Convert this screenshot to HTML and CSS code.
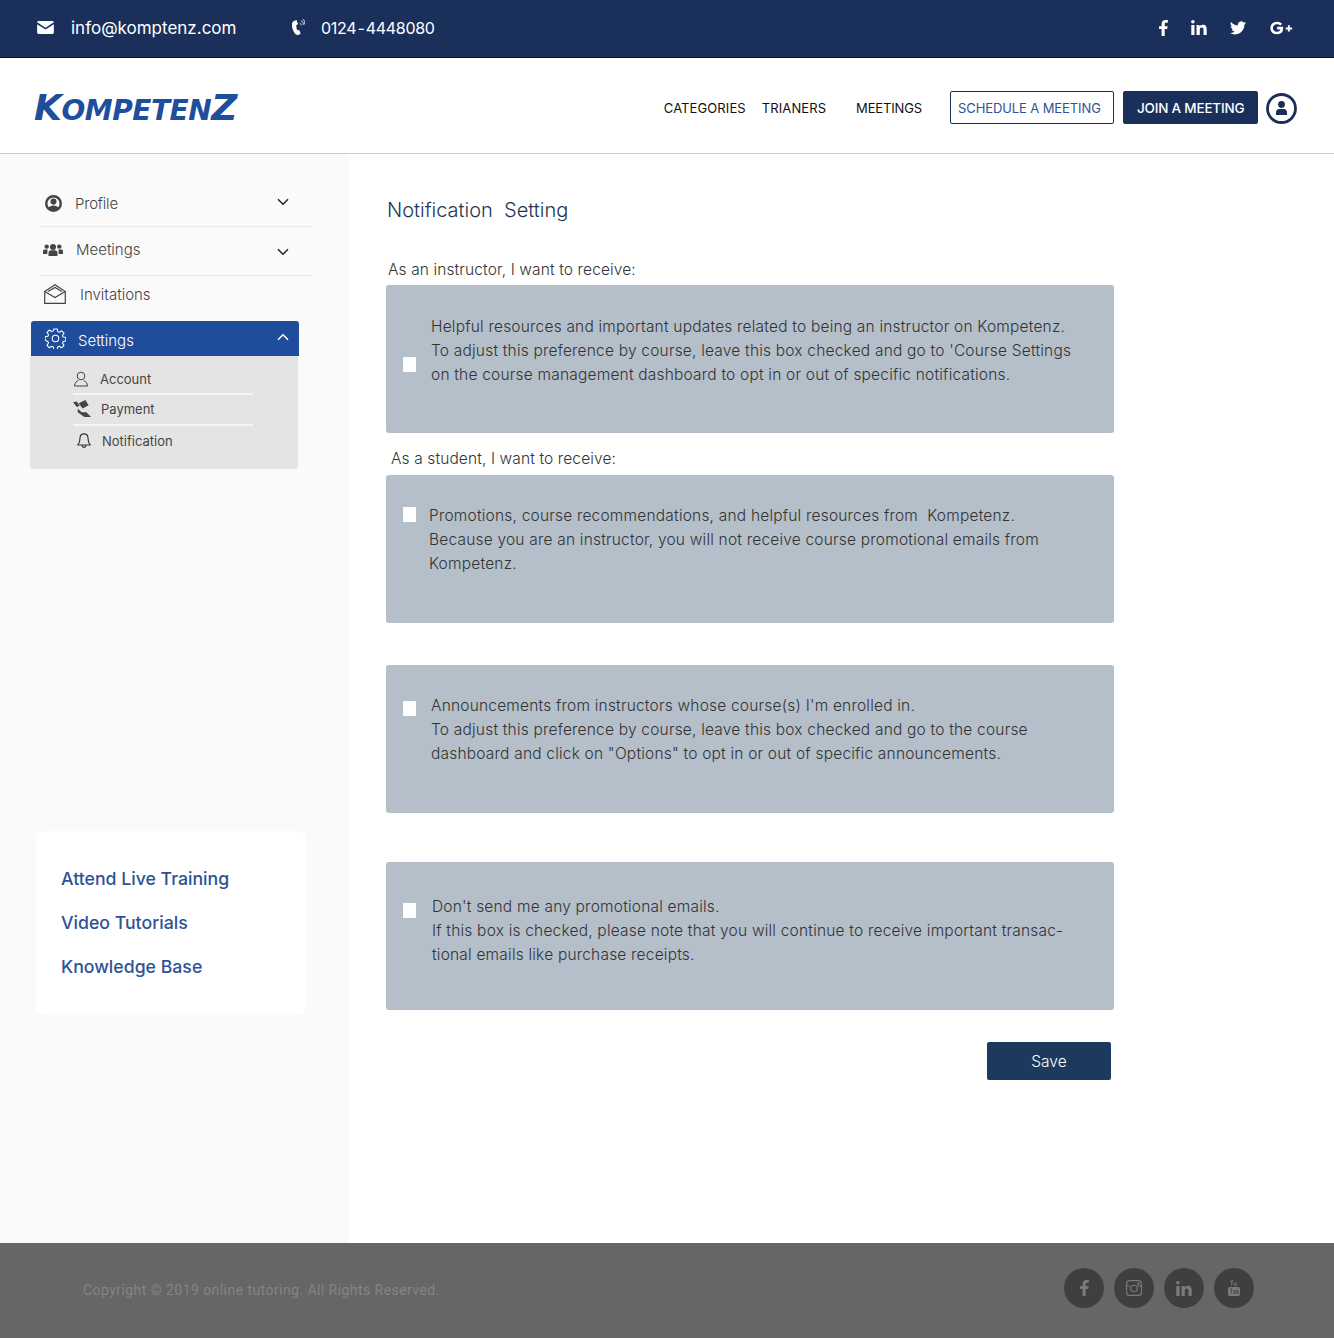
FILE: index.html
```html
<!DOCTYPE html>
<html lang="en">
<head>
    <meta charset="UTF-8">
    <title>Kompetenz - Notification Setting</title>
    <link rel="stylesheet" href="styles.css">
</head>
<body>
    <div class="topbar">
        <div class="contact">
            <svg class="ico-mail" viewBox="0 0 18 14"><path d="M1.500 0h15c.8 0 1.500.7 1.500 1.400L9 7.200 0 1.400C0 .7.7 0 1.500 0z" fill="#fff"/><path d="M0 3.400l9 5.700 9-5.700v9.100c0 .8-.7 1.500-1.500 1.500h-15C.7 14 0 13.300 0 12.500z" fill="#fff"/></svg>
            <span class="mail-text">info@komptenz.com</span>
            <svg class="ico-phone" viewBox="0 0 14 18"><path d="M3 2L5.600 1l1.400 4-1.700 1.300c-.1 1.800.2 3.400 1 5l1.900-.2 1.500 3.600-2.400 1.200c-1.600.4-3.200-.6-4.200-2.600C1.500 10.800.8 7.500 1 5c.1-1.300.9-2.400 2-3z" fill="#fff"/><path d="M8.800 4.200c.9.200 1.200 1 1.100 2M10.200 2c1.700.4 2.300 2 2 3.900M11.500.4c2 .6 2.700 2.600 2.200 5" fill="none" stroke="#fff" stroke-width=".9"/></svg>
            <span class="phone-text">0124 - 4448080</span>
        </div>
        <div class="top-social">
            <svg class="ico-f" viewBox="0 0 9 16"><path d="M2.600 16V9H0V6.200h2.600V4.100C2.600 1.500 4.100 0 6.500 0c1.100 0 2 .1 2.300.1v2.600H7.200c-1.200 0-1.500.6-1.500 1.400v2.100h2.900L8.200 9H5.700v7z" fill="#fff"/></svg>
            <svg class="ico-in" viewBox="0 0 16 15"><path d="M.3 5h3.200v10H.3zM1.900 0a1.800 1.800 0 1 1 0 3.600 1.800 1.800 0 0 1 0-3.600zM5.500 5h3v1.400c.5-.9 1.600-1.700 3.200-1.700 3.300 0 4 2.100 4 4.900V15h-3.200V10.200c0-1.200 0-2.700-1.700-2.700s-2 1.300-2 2.600V15H5.500z" fill="#fff"/></svg>
            <svg class="ico-tw" viewBox="0 0 24 20"><path d="M24 2.400c-.9.400-1.800.7-2.800.8 1-.6 1.800-1.600 2.200-2.700-1 .6-2 1-3.100 1.200A4.900 4.900 0 0 0 11.900 6.200 14 14 0 0 1 1.700.9a4.900 4.900 0 0 0 1.500 6.600c-.8 0-1.600-.2-2.200-.6v.1c0 2.400 1.700 4.400 3.900 4.800-.7.200-1.500.2-2.200.1.600 2 2.400 3.400 4.600 3.400A9.900 9.900 0 0 1 0 17.400 14 14 0 0 0 7.500 19.600c9.100 0 14-7.500 14-14v-.6c1-.7 1.800-1.600 2.500-2.600z" fill="#fff"/></svg>
            <svg class="ico-gp" viewBox="0 0 24 14"><path d="M12.200 3.600A5.400 5.400 0 0 0 8.200 2 5 5 0 0 0 2.600 7 5 5 0 0 0 8 12c3 0 4.900-1.800 4.900-4.900H8.200" fill="none" stroke="#fff" stroke-width="2.600"/><path d="M19.900 4.200v6.400M16.700 7.400h6.400" fill="none" stroke="#fff" stroke-width="2"/></svg>
        </div>
    </div>

    <div class="navbar">
        <div class="logo"><span class="logo-cap">K</span>OMPETEN<span class="logo-cap">Z</span></div>
        <div class="nav-links">
            <a class="nav-categories">CATEGORIES</a>
            <a class="nav-trainers">TRIANERS</a>
            <a class="nav-meetings">MEETINGS</a>
            <a class="btn-outline">SCHEDULE A MEETING</a>
            <a class="btn-solid">JOIN A MEETING</a>
            <svg class="ico-user" viewBox="0 0 31 31"><circle cx="15.500" cy="15.500" r="14" fill="none" stroke="#1b2f5b" stroke-width="2.800"/><circle cx="15.500" cy="11.500" r="3.400" fill="#1b2f5b"/><path d="M10 22v-2.500c0-2.400 1.500-3.600 3-3.600h5c1.500 0 3 1.200 3 3.600V22z" fill="#1b2f5b"/></svg>
        </div>
    </div>

    <div class="page">
        <div class="sidebar">
            <div class="side-row row-profile">
                <svg class="side-ico ico-profile" viewBox="0 0 18 18"><circle cx="9" cy="9" r="7.700" fill="none" stroke="#444" stroke-width="2.600"/><circle cx="9" cy="7" r="3.200" fill="#444"/><path d="M3.500 14c1-2.200 3-3 5.500-3s4.500.8 5.500 3L9 17z" fill="#444"/></svg>
                <span>Profile</span>
                <svg class="chev" viewBox="0 0 12 8"><path d="M1 1.200l5 5 5-5" fill="none" stroke="#222" stroke-width="1.500"/></svg>
            </div>
            <div class="side-row row-meetings">
                <svg class="side-ico ico-group" viewBox="0 0 20 13"><circle cx="10" cy="4" r="3" fill="#444"/><circle cx="3.700" cy="3.600" r="2.200" fill="#444"/><circle cx="16.300" cy="3.600" r="2.200" fill="#444"/><path d="M5.500 13V10c0-1.800 1.300-2.700 2.500-2.700h4c1.200 0 2.500.9 2.500 2.700v3z" fill="#444"/><path d="M0 10.500V8.200C0 7 1 6.400 2 6.400h2.500L4.300 11H0zM20 10.500V8.200c0-1.200-1-1.800-2-1.800h-2.500l.2 4.600H20z" fill="#444"/></svg>
                <span>Meetings</span>
                <svg class="chev chev-low" viewBox="0 0 12 8"><path d="M1 1.200l5 5 5-5" fill="none" stroke="#222" stroke-width="1.500"/></svg>
            </div>
            <div class="side-row row-invites">
                <svg class="side-ico ico-open" viewBox="0 0 22 20"><path d="M.7 7.500L11 .8l10.300 6.700v11.800H.7z" fill="none" stroke="#444" stroke-width="1.200"/><path d="M.7 7.500L11 13.600l10.300-6.100M4 7.500L11 3.500l7 4" fill="none" stroke="#444" stroke-width="1.200"/></svg>
                <span>Invitations</span>
            </div>
            <div class="settings-head">
                <svg class="ico-gear" viewBox="0 0 22 22"><path d="M9.200 1h3.600l.5 2.800 1.700.7 2.400-1.600 2.500 2.500-1.600 2.400.7 1.700 2.800.5v3.600l-2.800.5-.7 1.700 1.600 2.400-2.500 2.500-2.400-1.600-1.700.7-.5 2.800H9.200l-.5-2.800-1.700-.7-2.400 1.600-2.500-2.500 1.600-2.400-.7-1.700L.2 12.800V9.200L3 8.700l.7-1.700-1.600-2.400 2.500-2.500L7 3.700l1.700-.7z" fill="none" stroke="#fff" stroke-width="1.100" stroke-linejoin="round"/><circle cx="11" cy="11" r="3.400" fill="none" stroke="#fff" stroke-width="1.100"/></svg>
                <span>Settings</span>
                <svg class="chev chev-up" viewBox="0 0 12 8"><path d="M1 6.800l5-5 5 5" fill="none" stroke="#fff" stroke-width="1.500"/></svg>
            </div>
            <div class="settings-sub">
                <div class="sub-row sub-account">
                    <svg class="sub-ico" viewBox="0 0 16 16"><circle cx="8" cy="5" r="3.800" fill="none" stroke="#444" stroke-width="1"/><path d="M1.500 15c0-3.400 2.500-5 3.800-5.500M14.500 15c0-3.400-2.500-5-3.800-5.500M1.500 15h13" fill="none" stroke="#444" stroke-width="1"/></svg>
                    <span>Account</span>
                </div>
                <div class="sub-row sub-payment">
                    <svg class="sub-ico ico-pay" viewBox="0 0 20 19"><path d="M0 2.500l4-1 3 4.500-3 1.500z" fill="#444"/><path d="M6 3.500L13 0l3.500 5.500-6.500 3.500z" fill="#444"/><path d="M5 9l4 4h5l5 5h-7L5 13z" fill="#444"/></svg>
                    <span>Payment</span>
                </div>
                <div class="sub-row sub-notif">
                    <svg class="sub-ico" viewBox="0 0 16 18"><path d="M8 1c-3 0-4.500 2.300-4.500 5 0 4-1 5.800-2.500 7.500h14C13.500 11.800 12.500 10 12.500 6 12.500 3.300 11 1 8 1z" fill="none" stroke="#333" stroke-width="1.300" stroke-linejoin="round"/><path d="M6 13.800c0 3 4 3 4 0" fill="none" stroke="#333" stroke-width="1.300"/></svg>
                    <span>Notification</span>
                </div>
            </div>
            <div class="quick-links">
                <a>Attend Live Training</a>
                <a>Video Tutorials</a>
                <a>Knowledge Base</a>
            </div>
        </div>

        <div class="content">
            <h1 class="page-title">Notification&nbsp; Setting</h1>
            <p class="group-label label-instructor">As an instructor, I want to receive:</p>
            <div class="pref-card card-one">
                <span class="check"></span>
                <p>Helpful resources and important updates related to being an instructor on Kompetenz.<br>To adjust this preference by course, leave this box checked and go to 'Course Settings<br>on the course management dashboard to opt in or out of specific notifications.</p>
            </div>
            <p class="group-label label-student">As a student, I want to receive:</p>
            <div class="pref-card card-two">
                <span class="check"></span>
                <p>Promotions, course recommendations, and helpful resources from&nbsp; Kompetenz.<br>Because you are an instructor, you will not receive course promotional emails from<br>Kompetenz.</p>
            </div>
            <div class="pref-card card-three">
                <span class="check"></span>
                <p>Announcements from instructors whose course(s) I'm enrolled in.<br>To adjust this preference by course, leave this box checked and go to the course<br>dashboard and click on "Options" to opt in or out of specific announcements.</p>
            </div>
            <div class="pref-card card-four">
                <span class="check"></span>
                <p>Don't send me any promotional emails.<br>If this box is checked, please note that you will continue to receive important transac-<br>tional emails like purchase receipts.</p>
            </div>
            <div class="save-row"><button class="save-btn">Save</button></div>
        </div>
    </div>

    <div class="footer">
        <span class="copyright">Copyright © 2019 online tutoring. All Rights Reserved.</span>
        <div class="foot-social">
            <span class="foot-circle"><svg width="9" height="16" viewBox="0 0 9 16"><path d="M2.600 16V9H0V6.200h2.600V4.100C2.600 1.500 4.100 0 6.500 0c1.100 0 2 .1 2.300.1v2.600H7.200c-1.200 0-1.500.6-1.500 1.400v2.100h2.900L8.200 9H5.700v7z" fill="#7b7b7b"/></svg></span>
            <span class="foot-circle"><svg width="16" height="16" viewBox="0 0 16 16"><rect x=".6" y=".6" width="14.800" height="14.800" rx="3" fill="none" stroke="#7b7b7b" stroke-width="1.100"/><circle cx="8" cy="8.500" r="3.200" fill="none" stroke="#7b7b7b" stroke-width="1.100"/><path d="M.6 6h3.800M11.600 6h3.800" stroke="#7b7b7b" stroke-width="1.100"/><rect x="11.300" y="2.600" width="2.200" height="2.200" fill="#7b7b7b"/></svg></span>
            <span class="foot-circle"><svg width="16" height="15" viewBox="0 0 16 15"><path d="M.3 5h3.200v10H.3zM1.900 0a1.800 1.800 0 1 1 0 3.600 1.800 1.800 0 0 1 0-3.600zM5.500 5h3v1.400c.5-.9 1.600-1.700 3.200-1.700 3.300 0 4 2.100 4 4.900V15h-3.200V10.200c0-1.200 0-2.700-1.700-2.700s-2 1.300-2 2.600V15H5.500z" fill="#7b7b7b"/></svg></span>
            <span class="foot-circle"><svg width="12" height="16" viewBox="0 0 12 16"><path d="M2.500 0l1.200 2.600L4.900 0M3.700 2.600v3M6.200 2.500v2.400c0 .6.600.8 1.100.4l.7-.4M8.200 2.500v3.200" fill="none" stroke="#7b7b7b" stroke-width=".9"/><rect y="7" width="12" height="9" rx="2" fill="#7b7b7b"/><path d="M2 9h2.400M3.200 9v5M5.600 10v3.600h1.600V10M8.800 9v4.600h1.600V11H8.800" fill="none" stroke="#3f3f3f" stroke-width=".7"/></svg></span>
        </div>
    </div>
</body>
</html>
```

FILE: styles.css
```css
* {
    box-sizing: border-box;
}
body {
    margin: 0;
    font-family: 'Inter', sans-serif;
    background: #fff;
    color: #333;
}
p, h1 {
    margin: 0;
}
svg {
    display: block;
    flex: none;
}

/* top bar */
.topbar {
    height: 58px;
    background: #1b2f5b;
    border-bottom: 1px solid #0c1220;
    color: #fff;
    display: flex;
    justify-content: space-between;
    align-items: center;
    padding: 0 41px 2px 37px;
}
.contact, .top-social {
    display: flex;
    align-items: center;
}
.ico-mail {
    width: 17px;
    height: 13px;
    margin-right: 17px;
}
.mail-text {
    font-size: 17px;
    width: 220px;
    white-space: nowrap;
}
.ico-phone {
    width: 14px;
    height: 18px;
    margin-right: 16px;
}
.phone-text {
    font-size: 16px;
    white-space: nowrap;
    word-spacing: -3px;
    letter-spacing: -0.3px;
}
.ico-f {
    width: 9px;
    height: 16px;
    margin-right: 23px;
}
.ico-in {
    width: 16px;
    height: 15px;
    margin-right: 23px;
}
.ico-tw {
    width: 16px;
    height: 14px;
    margin-right: 23px;
}
.ico-gp {
    width: 24px;
    height: 14px;
}

/* nav */
.navbar {
    height: 96px;
    border-bottom: 1px solid #ccc;
    display: flex;
    justify-content: space-between;
    align-items: center;
    padding: 4px 37px 0 34px;
}
.logo {
    font-family: 'DejaVu Sans', sans-serif;
    font-weight: bold;
    font-style: italic;
    font-size: 28px;
    letter-spacing: -0.45px;
    color: #1f4e9c;
    white-space: nowrap;
}
.logo-cap {
    font-size: 36px;
}
.nav-links {
    display: flex;
    align-items: center;
    font-size: 13px;
    letter-spacing: 0.1px;
    color: #111;
}
.nav-categories {
    margin-right: 16px;
}
.nav-trainers {
    margin-right: 30px;
}
.nav-meetings {
    margin-right: 28px;
    letter-spacing: -0.15px;
}
.btn-outline, .btn-solid {
    height: 33px;
    display: flex;
    align-items: center;
    border-radius: 2px;
    border: 1px solid #1b2f5b;
}
.btn-outline {
    width: 164px;
    color: #2f5296;
    margin-right: 9px;
    padding-left: 7px;
    font-size: 13px;
    letter-spacing: -0.1px;
}
.btn-solid {
    width: 135px;
    background: #1b2f5b;
    color: #fff;
    font-size: 13.5px;
    font-weight: 500;
    margin-right: 8px;
    padding-left: 13px;
    letter-spacing: -0.2px;
    white-space: nowrap;
}
.ico-user {
    width: 31px;
    height: 31px;
    margin-top: 2px;
}

/* sidebar */
.page {
    display: flex;
    height: 1089px;
}
.sidebar {
    width: 349px;
    background: #fafafa;
    padding: 27px 0 0 30px;
    flex: none;
}
.side-row {
    display: flex;
    align-items: center;
    position: relative;
    width: 272px;
    margin-left: 10px;
    font-size: 15px;
    font-weight: 300;
    color: #444;
}
.row-profile {
    height: 46px;
    padding-left: 5px;
    border-bottom: 1px solid #e8e8e8;
    letter-spacing: -0.2px;
}
.row-meetings {
    height: 49px;
    padding: 0 0 4px 3px;
    border-bottom: 1px solid #e8e8e8;
}
.row-invites {
    height: 40px;
    padding: 0 0 4px 4px;
}
.side-ico {
    margin-right: 14px;
}
.ico-profile {
    width: 17px;
    height: 17px;
    margin-right: 13px;
}
.ico-group {
    width: 20px;
    height: 13px;
    margin-right: 13px;
}
.ico-open {
    width: 22px;
    height: 20px;
    margin-right: 14px;
}
.chev {
    position: absolute;
    left: 237px;
    top: 50%;
    width: 12px;
    height: 8px;
    margin-top: -6px;
}
.chev-low {
    margin-top: -3px;
}
.settings-head {
    position: relative;
    width: 268px;
    height: 35px;
    margin: 5px 0 0 1px;
    background: #204d9b;
    border-radius: 3px 3px 0 0;
    color: #fff;
    font-size: 15px;
    font-weight: 300;
    display: flex;
    align-items: center;
    padding: 4px 0 0 14px;
}
.ico-gear {
    width: 21px;
    height: 21px;
    margin: -4px 12px 0 0;
}
.chev-up {
    left: 246px;
}
.settings-sub {
    width: 268px;
    height: 113px;
    background: #e4e4e4;
    border-radius: 0 0 3px 3px;
    padding: 8px 0 0 43px;
}
.sub-row {
    width: 180px;
    display: flex;
    align-items: center;
    font-size: 13px;
    color: #444;
    height: 31px;
    border-bottom: 2px solid #f5f5f5;
}
.sub-payment {
    padding-bottom: 2px;
}
.sub-notif {
    border-bottom: none;
    padding-bottom: 2px;
}
.sub-ico {
    width: 16px;
    height: 16px;
    margin: 0 11px 0 0;
}
.sub-notif .sub-ico {
    margin: 0 10px 0 3px;
}
.ico-pay {
    width: 19px;
    height: 18px;
    margin-right: 9px;
}
.quick-links {
    width: 270px;
    height: 184px;
    margin: 362px 0 0 6px;
    background: #fff;
    border-radius: 8px;
    padding: 37px 0 0 25px;
    display: flex;
    flex-direction: column;
    gap: 22px;
    font-size: 17.7px;
    line-height: 22px;
    font-weight: 500;
    color: #2f5296;
}

/* notification settings */
.content {
    padding: 42px 0 0 37px;
    width: 800px;
}
.page-title {
    font-size: 20px;
    line-height: 28px;
    font-weight: 300;
    color: #1d3557;
    padding-left: 1px;
}
.group-label {
    font-size: 15.5px;
    line-height: 20px;
    font-weight: 300;
    letter-spacing: 0.12px;
    color: #333;
}
.label-instructor {
    margin: 36px 0 5px 2px;
}
.label-student {
    margin: 16px 0 6px 5px;
}
.pref-card {
    width: 728px;
    height: 148px;
    background: #b4bfca;
    border-radius: 3px;
    position: relative;
    font-size: 15.5px;
    line-height: 24px;
    font-weight: 300;
    letter-spacing: 0.2px;
    color: #333;
    white-space: nowrap;
}
.check {
    position: absolute;
    left: 17px;
    width: 13px;
    height: 15px;
    background: #fff;
}
.card-one {
    padding: 30px 0 0 45px;
}
.card-one .check {
    top: 72px;
}
.card-two {
    padding: 29px 0 0 43px;
}
.card-two .check {
    top: 32px;
}
.card-three {
    margin-top: 42px;
    padding: 29px 0 0 45px;
}
.card-three .check {
    top: 36px;
}
.card-four {
    margin-top: 49px;
    padding: 33px 0 0 46px;
}
.card-four .check {
    top: 41px;
}
.save-row {
    width: 725px;
    display: flex;
    justify-content: flex-end;
    margin-top: 32px;
}
.save-btn {
    width: 124px;
    height: 38px;
    border: none;
    border-radius: 2px;
    background: #1c3a5e;
    color: #fff;
    font-family: inherit;
    font-size: 15.5px;
    font-weight: 300;
}

/* footer */
.footer {
    height: 95px;
    background: #666;
    display: flex;
    justify-content: space-between;
    align-items: center;
    padding: 0 80px 0 83px;
}
.copyright {
    font-family: 'Roboto', sans-serif;
    font-size: 14px;
    letter-spacing: 0.44px;
    color: #848484;
    margin-top: -1px;
}
.foot-social {
    display: flex;
    gap: 10px;
    margin-top: -5px;
}
.foot-circle {
    width: 40px;
    height: 40px;
    border-radius: 50%;
    background: #3f3f3f;
    display: flex;
    align-items: center;
    justify-content: center;
}
```
